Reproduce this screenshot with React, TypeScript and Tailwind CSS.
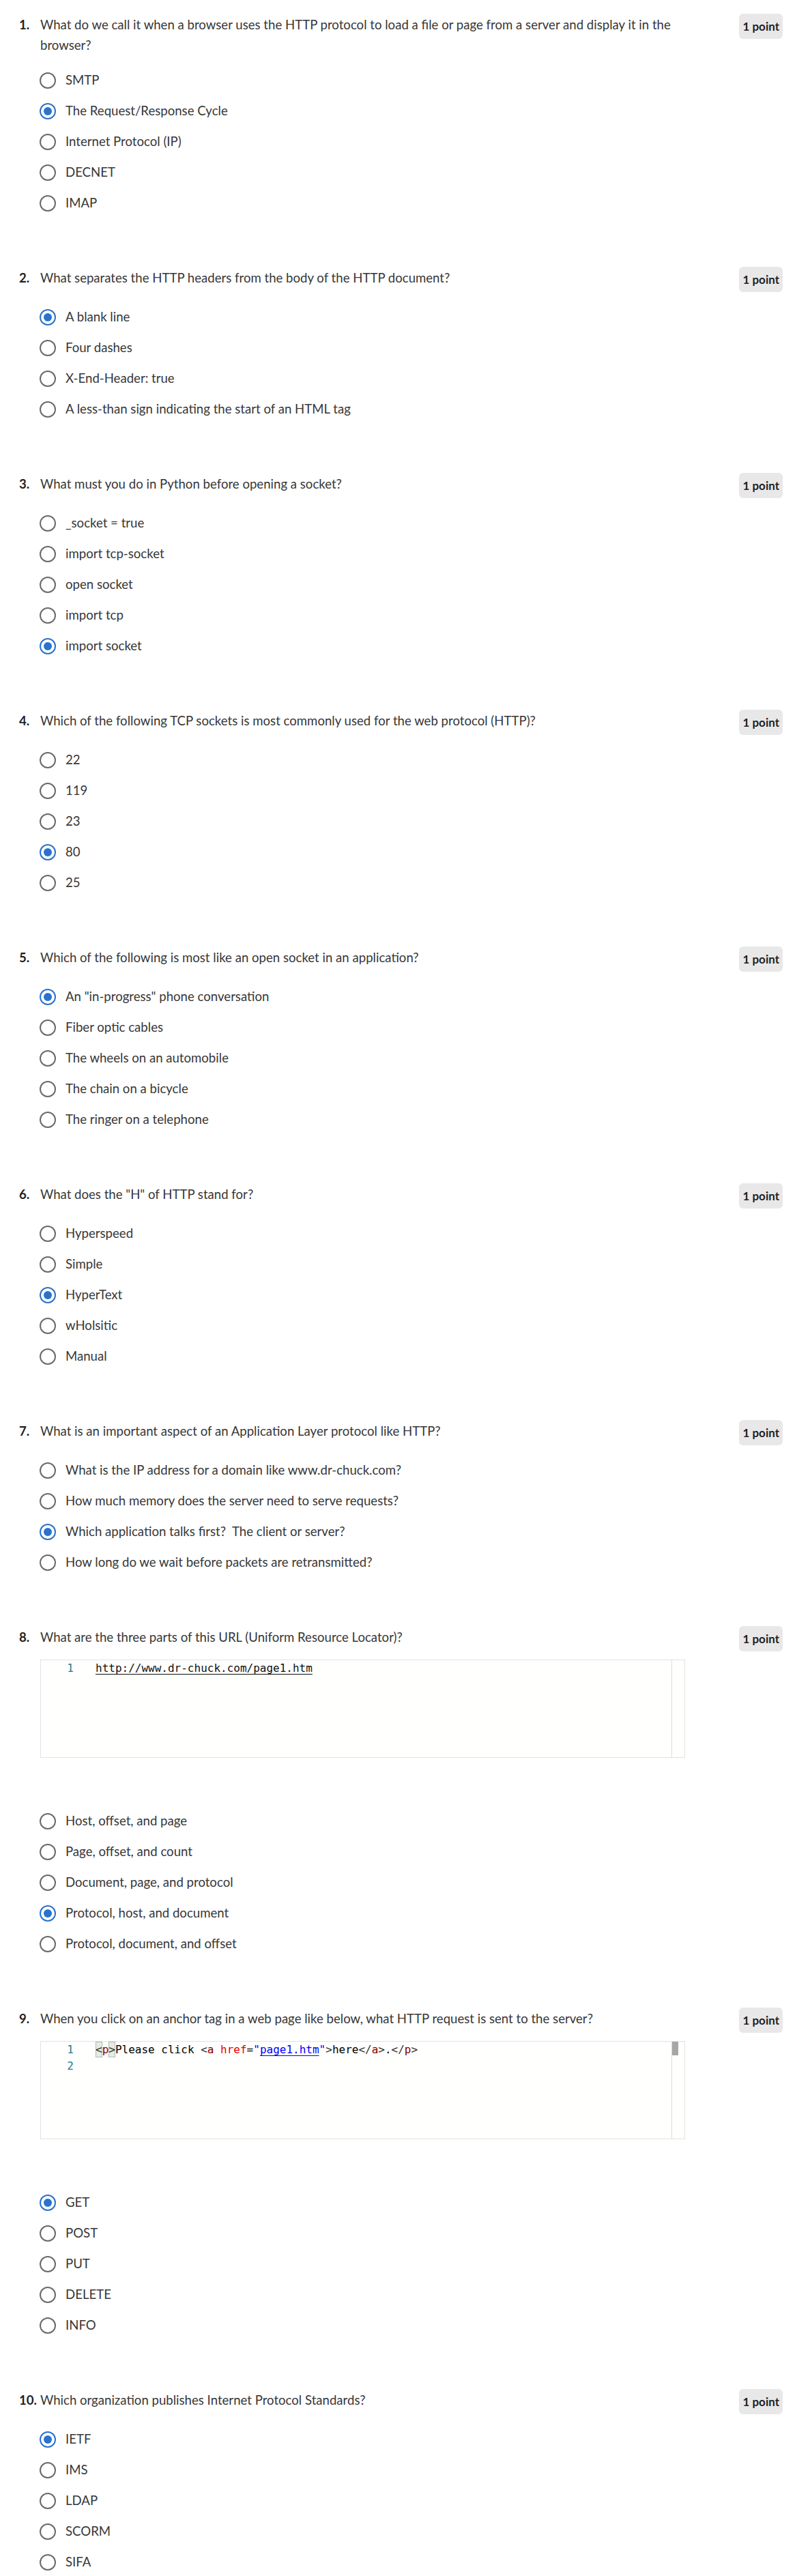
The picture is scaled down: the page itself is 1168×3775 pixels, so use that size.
import type { ReactNode } from "react";

type Question = {
  id: number;
  text: string;
  options: string[];
  answer: number;
  code?: ReactNode;
  codeLines?: number;
  thumb?: boolean;
};

const Tag = ({ children }: { children: ReactNode }) => (
  <span className="text-[#800000]">{children}</span>
);
const Delim = ({ children }: { children: ReactNode }) => (
  <span className="text-[#383838]">{children}</span>
);
const Match = ({ children }: { children: ReactNode }) => (
  <span className="inline-block leading-[23px] bg-[#e4ece4] shadow-[inset_0_0_0_1px_#b6b6b6] text-[#383838]">
    {children}
  </span>
);

const urlCode = (
  <span className="text-[#101010] underline underline-offset-[3px]">http://www.dr-chuck.com/page1.htm</span>
);

const anchorCode = (
  <span className="text-[#000]">
    <Match>&lt;</Match>
    <Tag>p</Tag>
    <Match>&gt;</Match>
    Please click <Delim>&lt;</Delim>
    <Tag>a</Tag> <span className="text-[#e50000]">href</span>=
    <span className="text-[#0000ff]">
      "<span className="underline underline-offset-[3px]">page1.htm</span>"
    </span>
    <Delim>&gt;</Delim>here<Delim>&lt;/</Delim>
    <Tag>a</Tag>
    <Delim>&gt;</Delim>.<Delim>&lt;/</Delim>
    <Tag>p</Tag>
    <Delim>&gt;</Delim>
  </span>
);

const questions: Question[] = [
  {
    id: 1,
    text: "What do we call it when a browser uses the HTTP protocol to load a file or page from a server and display it in the browser?",
    options: ["SMTP", "The Request/Response Cycle", "Internet Protocol (IP)", "DECNET", "IMAP"],
    answer: 1,
  },
  {
    id: 2,
    text: "What separates the HTTP headers from the body of the HTTP document?",
    options: ["A blank line", "Four dashes", "X-End-Header: true", "A less-than sign indicating the start of an HTML tag"],
    answer: 0,
  },
  {
    id: 3,
    text: "What must you do in Python before opening a socket?",
    options: ["_socket = true", "import tcp-socket", "open socket", "import tcp", "import socket"],
    answer: 4,
  },
  {
    id: 4,
    text: "Which of the following TCP sockets is most commonly used for the web protocol (HTTP)?",
    options: ["22", "119", "23", "80", "25"],
    answer: 3,
  },
  {
    id: 5,
    text: "Which of the following is most like an open socket in an application?",
    options: [
      'An "in-progress" phone conversation',
      "Fiber optic cables",
      "The wheels on an automobile",
      "The chain on a bicycle",
      "The ringer on a telephone",
    ],
    answer: 0,
  },
  {
    id: 6,
    text: 'What does the "H" of HTTP stand for?',
    options: ["Hyperspeed", "Simple", "HyperText", "wHolsitic", "Manual"],
    answer: 2,
  },
  {
    id: 7,
    text: "What is an important aspect of an Application Layer protocol like HTTP?",
    options: [
      "What is the IP address for a domain like www.dr-chuck.com?",
      "How much memory does the server need to serve requests?",
      "Which application talks first?\u00a0 The client or server?",
      "How long do we wait before packets are retransmitted?",
    ],
    answer: 2,
  },
  {
    id: 8,
    text: "What are the three parts of this URL (Uniform Resource Locator)?",
    code: urlCode,
    codeLines: 1,
    options: [
      "Host, offset, and page",
      "Page, offset, and count",
      "Document, page, and protocol",
      "Protocol, host, and document",
      "Protocol, document, and offset",
    ],
    answer: 3,
  },
  {
    id: 9,
    text: "When you click on an anchor tag in a web page like below, what HTTP request is sent to the server?",
    code: anchorCode,
    codeLines: 2,
    thumb: true,
    options: ["GET", "POST", "PUT", "DELETE", "INFO"],
    answer: 0,
  },
  {
    id: 10,
    text: "Which organization publishes Internet Protocol Standards?",
    options: ["IETF", "IMS", "LDAP", "SCORM", "SIFA"],
    answer: 0,
  },
];

const Radio = ({ checked }: { checked: boolean }) =>
  checked ? (
    <span className="-ml-px w-6 h-6 shrink-0 rounded-full border-[2.5px] border-[#2a73cc] flex items-center justify-center">
      <span className="w-3 h-3 rounded-full bg-[#2a73cc]" />
    </span>
  ) : (
    <span className="-ml-px w-6 h-6 shrink-0 rounded-full border-[2.5px] border-[#6a6a6a]" />
  );

const CodeBox = ({ code, lines, thumb }: { code: ReactNode; lines: number; thumb?: boolean }) => (
  <div className="mt-3 w-[945px] h-[144px] border border-[#e2e2e2] bg-[#fffffe] flex font-['DejaVu_Sans_Mono',monospace] text-[16px] leading-[24px]">
    <div className="w-[48px] text-right text-[#237893]">
      {Array.from({ length: lines }, (_, i) => (
        <div key={i}>{i + 1}</div>
      ))}
    </div>
    <div className="flex-1 pl-[32px] whitespace-pre">{code}</div>
    <div className="w-[19px] border-l border-[#dcdcdc]">
      {thumb && <div className="w-[9px] h-[20px] bg-[#a6a6a6]" />}
    </div>
  </div>
);

const QuestionBlock = ({ q }: { q: Question }) => (
  <div className="mb-[71px]">
    <div className="flex items-start">
      <span className="w-[31px] shrink-0 pt-px leading-[30px] font-bold text-[#1f1f1f]">{q.id}.</span>
      <p className="w-[950px] pt-px leading-[30px] text-[#373737]">{q.text}</p>
      <span className="ml-auto h-[37px] px-[5px] rounded-md bg-[#e8e8e8] flex items-center text-[17px] font-bold text-[#1f1f1f]">
        1 point
      </span>
    </div>
    <div className="pl-[31px]">
      {q.code && <CodeBox code={q.code} lines={q.codeLines ?? 1} thumb={q.thumb} />}
      <div className={q.code ? "mt-[70px]" : "mt-[14px]"}>
        {q.options.map((opt, i) => (
          <label key={i} className="flex items-center h-[45px]">
            <Radio checked={i === q.answer} />
            <span className="ml-[14px] text-[#373737]">{opt}</span>
          </label>
        ))}
      </div>
    </div>
  </div>
);

export default function App() {
  return (
    <div className="min-h-screen bg-white pt-5 pl-[28px] pr-[21px] font-['Lato',sans-serif] text-[18.6px]">
      {questions.map((q) => (
        <QuestionBlock key={q.id} q={q} />
      ))}
    </div>
  );
}
